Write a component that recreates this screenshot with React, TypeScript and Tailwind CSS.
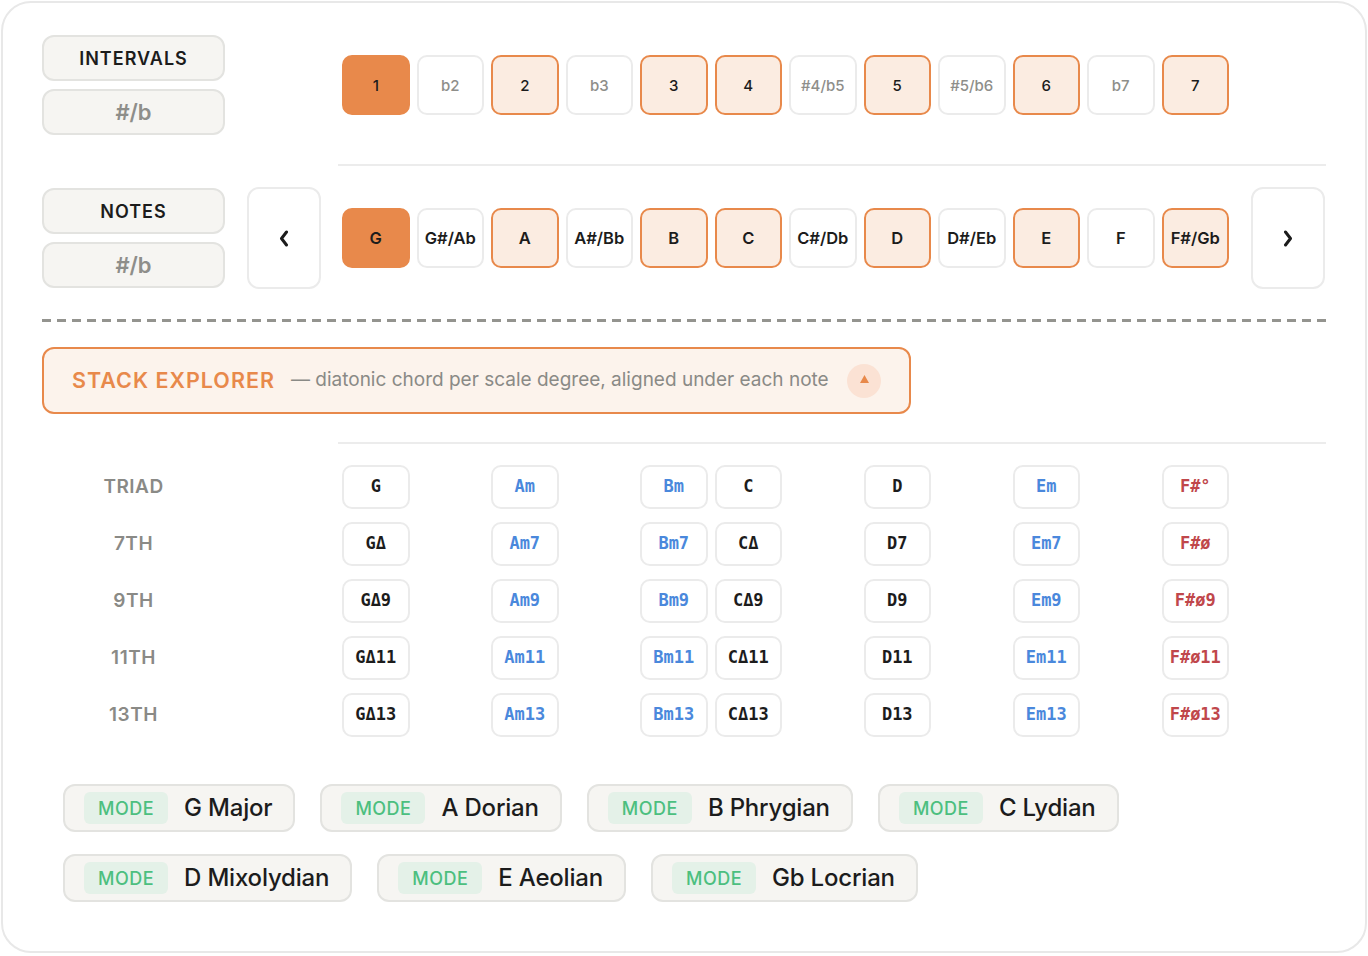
import React from "react";

const sans = "font-['Inter','Noto_Sans',sans-serif]";
const mono = "font-['DejaVu_Sans_Mono','Liberation_Mono',monospace]";

const intervals = [
  { label: "1", state: "root" },
  { label: "b2", state: "off" },
  { label: "2", state: "on" },
  { label: "b3", state: "off" },
  { label: "3", state: "on" },
  { label: "4", state: "on" },
  { label: "#4/b5", state: "off" },
  { label: "5", state: "on" },
  { label: "#5/b6", state: "off" },
  { label: "6", state: "on" },
  { label: "b7", state: "off" },
  { label: "7", state: "on" },
];

const notes = [
  { label: "G", state: "root" },
  { label: "G#/Ab", state: "off" },
  { label: "A", state: "on" },
  { label: "A#/Bb", state: "off" },
  { label: "B", state: "on" },
  { label: "C", state: "on" },
  { label: "C#/Db", state: "off" },
  { label: "D", state: "on" },
  { label: "D#/Eb", state: "off" },
  { label: "E", state: "on" },
  { label: "F", state: "off" },
  { label: "F#/Gb", state: "on" },
];

type Quality = "maj" | "min" | "dim";

// one column per scale degree, placed on the 12-slot chromatic grid
const chords: { col: string; quality: Quality; names: string[] }[] = [
  { col: "col-start-1", quality: "maj", names: ["G", "GΔ", "GΔ9", "GΔ11", "GΔ13"] },
  { col: "col-start-3", quality: "min", names: ["Am", "Am7", "Am9", "Am11", "Am13"] },
  { col: "col-start-5", quality: "min", names: ["Bm", "Bm7", "Bm9", "Bm11", "Bm13"] },
  { col: "col-start-6", quality: "maj", names: ["C", "CΔ", "CΔ9", "CΔ11", "CΔ13"] },
  { col: "col-start-8", quality: "maj", names: ["D", "D7", "D9", "D11", "D13"] },
  { col: "col-start-10", quality: "min", names: ["Em", "Em7", "Em9", "Em11", "Em13"] },
  { col: "col-start-12", quality: "dim", names: ["F#°", "F#ø", "F#ø9", "F#ø11", "F#ø13"] },
];

const rowStarts = ["row-start-1", "row-start-2", "row-start-3", "row-start-4", "row-start-5"];
const stackLabels = ["TRIAD", "7TH", "9TH", "11TH", "13TH"];

const qualityText: Record<Quality, string> = {
  maj: "text-[#1c1c1c]",
  min: "text-[#4a88dc]",
  dim: "text-[#c0474b]",
};

const modes = [
  ["G Major", "A Dorian", "B Phrygian", "C Lydian"],
  ["D Mixolydian", "E Aeolian", "Gb Locrian"],
];

function cellClass(state: string) {
  if (state === "root") return "bg-[#e8894b] border-[#e8894b] text-[#1c1c1c]";
  if (state === "on") return "bg-[#fbece1] border-[#e8894b] text-[#1c1c1c]";
  return "bg-white border-[#ebebeb]";
}

function SideButton({ children, muted }: { children: React.ReactNode; muted?: boolean }) {
  return (
    <div
      className={`flex h-[46px] items-center justify-center rounded-[12px] border-2 border-[#e3e3e0] bg-[#f6f5f2] ${
        muted ? "text-[22px] font-semibold text-[#8e8e8a]" : "text-[18px] font-semibold tracking-[1px] text-[#1c1c1c]"
      }`}
    >
      {children}
    </div>
  );
}

function Chevron({ dir }: { dir: "left" | "right" }) {
  return (
    <svg width="10" height="17" viewBox="0 0 10 17" fill="none">
      <path
        d={dir === "left" ? "M7.5 2 L2.5 8.5 L7.5 15" : "M2.5 2 L7.5 8.5 L2.5 15"}
        stroke="#1c1c1c"
        strokeWidth="3"
        strokeLinecap="round"
        strokeLinejoin="round"
      />
    </svg>
  );
}

function ArrowBox({ dir }: { dir: "left" | "right" }) {
  return (
    <div className="flex h-[102px] w-[74px] items-center justify-center rounded-[12px] border-2 border-[#ebebeb] bg-white">
      <Chevron dir={dir} />
    </div>
  );
}

export default function App() {
  return (
    <div className={`min-h-screen bg-white p-px ${sans}`}>
      <div className="h-[952px] w-[1366px] rounded-[30px] border-2 border-[#e8e8e8] bg-white px-[39px] pt-[32px]">
        {/* intervals row */}
        <div className="flex items-center">
          <div className="flex w-[183px] flex-col gap-[8px]">
            <SideButton>INTERVALS</SideButton>
            <SideButton muted>#/b</SideButton>
          </div>
          <div className="ml-[117px] grid w-[887px] grid-cols-12 gap-x-[7px]">
            {intervals.map((iv) => (
              <div
                key={iv.label}
                className={`flex h-[60px] items-center justify-center rounded-[10px] border-2 pt-[2px] text-[15px] font-medium ${cellClass(
                  iv.state
                )} ${iv.state === "off" ? "text-[#8e8e8a]" : ""}`}
              >
                {iv.label}
              </div>
            ))}
          </div>
        </div>

        <div className="ml-[296px] mt-[29px] h-[2px] bg-[#ececec]" />

        {/* notes row */}
        <div className="mt-[21px] flex items-center">
          <div className="flex w-[183px] flex-col gap-[8px]">
            <SideButton>NOTES</SideButton>
            <SideButton muted>#/b</SideButton>
          </div>
          <div className="ml-[22px]">
            <ArrowBox dir="left" />
          </div>
          <div className="ml-[21px] grid w-[887px] grid-cols-12 gap-x-[7px]">
            {notes.map((n) => (
              <div
                key={n.label}
                className={`flex h-[60px] items-center justify-center rounded-[10px] border-2 text-[16.5px] font-semibold text-[#1c1c1c] ${cellClass(
                  n.state
                )}`}
              >
                {n.label}
              </div>
            ))}
          </div>
          <div className="ml-[22px]">
            <ArrowBox dir="right" />
          </div>
        </div>

        <div className="mt-[30px] h-[3px] bg-[repeating-linear-gradient(90deg,#94948f_0_9px,transparent_9px_15px)]" />

        {/* stack explorer header */}
        <div className="mt-[25px] flex h-[67px] w-[869px] items-center rounded-[12px] border-2 border-[#e8894b] bg-[#fcf3ec] pl-[28px] pr-[28px]">
          <span className="text-[21.5px] font-semibold tracking-[1px] text-[#e8894b]">STACK EXPLORER</span>
          <span className="ml-[16px] text-[19px] text-[#8a8a86]">— diatonic chord per scale degree, aligned under each note</span>
          <div className="ml-auto flex h-[34px] w-[34px] items-center justify-center rounded-full bg-[#fbe2d4]">
            <svg width="9" height="8" viewBox="0 0 9 8" className="-mt-[4px]">
              <path d="M4.5 0 L9 8 L0 8 Z" fill="#e8894b" />
            </svg>
          </div>
        </div>

        <div className="ml-[296px] mt-[28px] h-[2px] bg-[#ececec]" />

        {/* chord stacks */}
        <div className="mt-[21px] flex">
          <div className="flex w-[183px] flex-col gap-[13px]">
            {stackLabels.map((l) => (
              <div
                key={l}
                className="flex h-[44px] items-center justify-center text-[19px] font-semibold tracking-[0.5px] text-[#8a8a86]"
              >
                {l}
              </div>
            ))}
          </div>
          <div className="ml-[117px] grid w-[887px] grid-cols-12 gap-x-[7px] gap-y-[13px]">
            {chords.map((c) =>
              c.names.map((name, i) => (
                <div
                  key={name}
                  className={`${c.col} ${rowStarts[i]} flex h-[44px] items-center justify-center rounded-[10px] border-2 border-[#ebebeb] bg-white text-[17px] font-bold ${mono} ${qualityText[c.quality]}`}
                >
                  {name}
                </div>
              ))
            )}
          </div>
        </div>

        {/* modes */}
        <div className="ml-[21px] mt-[47px] flex flex-col gap-[22px]">
          {modes.map((row, r) => (
            <div key={r} className="flex gap-[25px]">
              {row.map((m) => (
                <div
                  key={m}
                  className="flex h-[48px] items-center rounded-[12px] border-2 border-[#e3e3e0] bg-[#f6f5f2] pl-[19px] pr-[21px]"
                >
                  <span className="flex h-[32px] items-center rounded-[6px] bg-[#e4f1e8] px-[14px] text-[18px] font-medium tracking-[0.5px] text-[#4cbf7f]">
                    MODE
                  </span>
                  <span className="ml-[16px] text-[24px] font-medium tracking-[-0.2px] text-[#1c1c1c]">{m}</span>
                </div>
              ))}
            </div>
          ))}
        </div>
      </div>
    </div>
  );
}
